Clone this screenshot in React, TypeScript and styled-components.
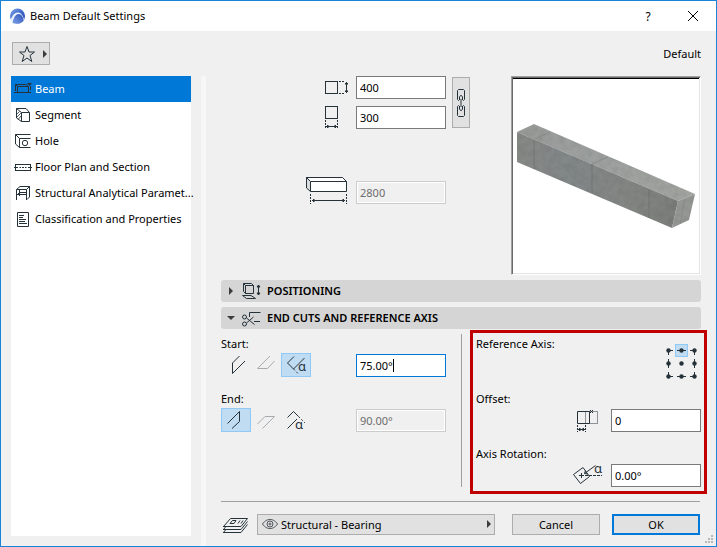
import React, { useState } from "react";
import styled, { createGlobalStyle, css } from "styled-components";

const INK = "#26323a";
const FAINT = "#a8abad";

const GlobalStyle = createGlobalStyle`
  * { box-sizing: border-box; }
  body { margin: 0; }
  body, button, input, select {
    font-family: "Noto Sans", "Open Sans", sans-serif;
    font-size: 11px;
    color: #000;
  }
  svg { display: block; flex: none; }
`;

/* ---------- window frame ---------- */

const Window = styled.div`
  position: relative;
  display: flex;
  flex-direction: column;
  min-height: 100vh;
  border: 1px solid #1883d7;
  background: #f0f0f0;
`;

const TitleBar = styled.header`
  display: flex;
  align-items: center;
  height: 30px;
  padding: 0 8px;
  background: #fff;
`;

const Title = styled.h1`
  flex: 1;
  margin: 0 0 0 4px;
  font-size: 11px;
  font-weight: 400;
  line-height: 16px;
`;

const CaptionButton = styled.button`
  display: flex;
  align-items: center;
  justify-content: center;
  width: 60px;
  height: 28px;
  padding: 0;
  border: 0;
  background: none;
  font-size: 12px;
  &:last-child { width: 30px; }
`;

const TopRow = styled.div`
  display: flex;
  align-items: center;
  justify-content: space-between;
  height: 45px;
  padding: 0 15px 0 11px;
`;

const FavoritesButton = styled.button`
  display: flex;
  align-items: center;
  gap: 4px;
  width: 38px;
  height: 23px;
  padding: 0 3px 0 5px;
  border: 1px solid #adadad;
  background: #e1e1e1;
`;

const Body = styled.div`
  flex: 1;
  display: grid;
  grid-template-columns: 180px 15px minmax(0, 1fr);
  padding: 0 15px 0 10px;
`;

const Sidebar = styled.nav`
  margin-bottom: 10px;
  background: #fff;
`;

const NavItem = styled.button<{ $active: boolean }>`
  display: flex;
  align-items: center;
  gap: 3px;
  width: 100%;
  height: 26px;
  padding: 0 0 0 3px;
  border: 0;
  text-align: left;
  line-height: 16px;
  white-space: nowrap;
  background: ${(p) => (p.$active ? "#0078d7" : "transparent")};
  color: ${(p) => (p.$active ? "#fff" : "#000")};
`;

const Splitter = styled.div`
  margin-left: 10px;
  background: #f7f7f7;
`;

const Content = styled.main`
  display: flex;
  flex-direction: column;
  gap: 5px;
  margin-left: 15px;
`;

/* ---------- fields ---------- */

const Geometry = styled.section`
  display: flex;
  align-items: flex-start;
  gap: 6px;
  height: 199px;
`;

const FieldStack = styled.div`
  display: flex;
  flex-direction: column;
  gap: 7px;
  width: 225px;
`;

const FieldRow = styled.label<{ $apart?: boolean }>`
  display: flex;
  align-items: flex-end;
  justify-content: flex-end;
  gap: 7px;
  margin-top: ${(p) => (p.$apart ? "40px" : "0")};
`;

const TextField = styled.input`
  width: 90px;
  height: 23px;
  padding: 0 3px;
  border: 1px solid #7a7a7a;
  border-radius: 0;
  outline: 0;
  background: #fff;
  &:disabled {
    border-color: #ccc;
    background: #f0f0f0;
    box-shadow: inset 0 0 0 1px #fff;
    color: #6d6d6d;
  }
`;

const EditingField = styled.span`
  position: relative;
  display: flex;
  margin-left: auto;
  ${TextField} { border-color: #0078d7; }
`;

const Caret = styled.span`
  position: absolute;
  left: 37px;
  top: 5px;
  width: 1px;
  height: 13px;
  background: #000;
`;

const LinkButton = styled.button`
  display: flex;
  align-items: center;
  justify-content: center;
  width: 18px;
  height: 51px;
  margin-top: 1px;
  padding: 0;
  border: 1px solid #adadad;
  background: #e1e1e1;
`;

const Preview = styled.div`
  width: 190px;
  height: 199px;
  margin-left: auto;
  border: 1px solid;
  border-color: #a0a0a0 #fff #fff #a0a0a0;
  box-shadow: inset 1px 1px 0 #696969, inset -1px -1px 0 #e3e3e3, inset 0 2px 0 #000;
  background: #fff;
`;

/* ---------- sections ---------- */

const SectionHeader = styled.button`
  display: flex;
  align-items: center;
  height: 22px;
  padding: 0 5px;
  border: 0;
  border-radius: 3px;
  background: #d5d5d5;
  font-weight: 600;
  line-height: 16px;
  text-align: left;
  > svg:first-child { margin-right: 6px; }
`;

const HeaderText = styled.span`
  margin-left: 5px;
`;

const Panel = styled.section`
  display: flex;
`;

const CutsColumn = styled.div`
  display: flex;
  flex-direction: column;
  gap: 12px;
  width: 225px;
  margin-right: 15px;
`;

const AxisColumn = styled.div`
  position: relative;
  flex: 1;
  display: flex;
  flex-direction: column;
  gap: 12px;
  padding-left: 14px;
  border-left: 1px solid #a0a0a0;
`;

const Highlight = styled.div`
  position: absolute;
  inset: -4px -6px -7px 8px;
  border: 3px solid #c00000;
  pointer-events: none;
`;

const Group = styled.div`
  height: 43px;
`;

const GroupLabel = styled.div`
  display: block;
  line-height: 19px;
`;

const ControlRow = styled.div`
  display: flex;
  align-items: flex-end;
  height: 24px;
`;

const ToggleButton = styled.button<{ $on: boolean }>`
  display: flex;
  width: 30px;
  height: 24px;
  padding: 0;
  border: 0;
  background: transparent;
  ${(p) =>
    p.$on &&
    css`
      background: #c0dcf3;
      box-shadow: inset 0 0 0 1px #90c8f6;
    `}
`;

const PushedField = styled(TextField)`
  margin-left: auto;
`;

const AxisGroup = styled(Group)`
  display: flex;
  justify-content: space-between;
`;

const PinGrid = styled.div`
  display: grid;
  grid-template-columns: repeat(3, 13px);
  grid-auto-rows: 13px;
  margin-top: 10px;
`;

const Pin = styled.label<{ $on: boolean }>`
  position: relative;
  width: 13px;
  height: 13px;
  background: ${(p) => (p.$on ? "#c0dcf3" : "transparent")};
  box-shadow: ${(p) => (p.$on ? "inset 0 0 0 1px #90c8f6" : "none")};
  input {
    position: absolute;
    inset: 0;
    margin: 0;
    appearance: none;
  }
`;

/* ---------- footer ---------- */

const Footer = styled.footer`
  display: flex;
  align-items: center;
  gap: 12px;
  margin: 9px 1px 11px 0;
  padding-top: 12px;
  border-top: 1px solid #a0a0a0;
`;

const LayerPicker = styled.label`
  flex: 1;
  display: flex;
  align-items: center;
  gap: 8px;
  margin-right: 5px;
  padding-left: 1px;
`;

const SelectBox = styled.span`
  position: relative;
  flex: 1;
  display: flex;
  svg {
    position: absolute;
    top: 3px;
    left: 4px;
    pointer-events: none;
  }
  svg:last-child {
    left: auto;
    right: 1px;
    top: 5px;
  }
`;

const Select = styled.select`
  flex: 1;
  height: 21px;
  padding: 0 20px 0 23px;
  border: 1px solid #adadad;
  border-radius: 0;
  background: #e1e1e1;
  appearance: none;
`;

const DialogButton = styled.button<{ $primary?: boolean }>`
  width: 88px;
  height: 21px;
  padding: 0;
  border: ${(p) => (p.$primary ? "2px solid #0078d7" : "1px solid #adadad")};
  background: #e1e1e1;
  line-height: 16px;
`;

const Grip = styled.svg`
  position: absolute;
  right: 2px;
  bottom: 2px;
`;

/* ---------- drawings ---------- */

type Draw = { w: number; h: number; color?: string; children: React.ReactNode };
const Icon = ({ w, h, color = INK, children }: Draw) => (
  <svg width={w} height={h} viewBox={`0 0 ${w} ${h}`} fill="none" stroke={color} overflow="visible" aria-hidden="true">
    {children}
  </svg>
);

const Alpha = ({ x, y }: { x: number; y: number }) => (
  <text x={x} y={y} fontSize="13" fill={INK} stroke="none" fontFamily="Noto Sans, sans-serif">α</text>
);

const Logo = () => (
  <svg width="17" height="17" viewBox="0 0 17 17" aria-hidden="true">
    <defs>
      <linearGradient id="logo" x1="0" y1="0" x2="1" y2="1">
        <stop offset="0" stopColor="#7ea6e8" />
        <stop offset="0.500" stopColor="#3f68c8" />
        <stop offset="1" stopColor="#2340a0" />
      </linearGradient>
      <linearGradient id="dome" x1="0" y1="1" x2="1" y2="0">
        <stop offset="0" stopColor="#7fa4e8" />
        <stop offset="1" stopColor="#2c50b8" />
      </linearGradient>
    </defs>
    <circle cx="8.500" cy="8" r="7.500" fill="url(#logo)" />
    <path d="M1.500 12.500C3 7 6.500 4 9.500 4.500C13 5.200 14.500 9 15 12C12.500 16 5 17 1.500 12.500Z" fill="#eef4fd" />
    <path d="M3.500 15C4 10.500 6.500 6 9.500 6C13 6.200 14.500 10 14.500 13C11.500 16 7 16.500 3.500 15Z" fill="url(#dome)" />
  </svg>
);

const Triangle = ({ down }: { down?: boolean }) => (
  <svg width="10" height="10" viewBox="0 0 10 10" fill="#3c3c3c" aria-hidden="true">
    <path d={down ? "M1 3H9L5 7Z" : "M3 1V9L7 5Z"} />
  </svg>
);

const navItems: { label: string; art: React.ReactNode }[] = [
  {
    label: "Beam",
    art: <><path d="M3.500 6.500H14.500V12.500H3.500ZM1.500 4.500H12L14.500 6.500M1.500 4.500L3.500 6.500M1.500 4.500V11M0 12.500H17M16.500 6V10" /><path d="M13 3H18L15.500 6Z" fill={INK} stroke="none" /></>,
  },
  {
    label: "Segment",
    art: <><path d="M7.500 6.500H15.500V15.500H7.500ZM2.500 2.500H12L15.500 6.500M2.500 2.500L7.500 6.500M2.500 2.500V12L7.500 15.500" /><path d="M3 8L5.500 5.500M3 11L7 7M4.500 13L7 10" strokeWidth="0.800" /></>,
  },
  {
    label: "Hole",
    art: <><path d="M16.500 2.500H1.500V12L5.500 15.500H16.500M1.500 2.500L5.500 6.500H16.500M5.500 6.500V15.500" /><circle cx="11" cy="11" r="2.700" /></>,
  },
  {
    label: "Floor Plan and Section",
    art: <><rect x="1.500" y="6.500" width="15" height="6" /><path d="M0 9.500H4M5.500 9.500H7M8 9.500H10M11 9.500H12.500M14 9.500H18" /></>,
  },
  {
    label: "Structural Analytical Paramet...",
    art: <path d="M2.500 16V5.500L6 2.500H15.500V13L13 15.500M2.500 5.500H12.500V16M12.500 5.500L15.500 2.500M5.500 5.500V12M2.500 10.500H12.500M5.500 8.500H12M3 11L6 8" />,
  },
  {
    label: "Classification and Properties",
    art: <path d="M3.500 2.500H14.500V16.500H3.500ZM5 5.500H10M5 7.500H9M5 9.500H12M5 11.500H11M5 13.500H13" />,
  },
];

const HeightIcon = () => (
  <Icon w={44} h={23}>
    <rect x="20.500" y="5.500" width="12" height="12" />
    <path d="M34 5.500H39M34 17.500H39" strokeDasharray="2 1" />
    <path d="M41.500 6V17M40 8L41.500 6.500L43 8ZM40 15L41.500 16.500L43 15Z" fill={INK} />
  </Icon>
);

const WidthIcon = () => (
  <Icon w={44} h={23}>
    <rect x="20.500" y="0.500" width="12" height="12" />
    <path d="M20.500 14V23M32.500 14V23" strokeDasharray="2 1" />
    <path d="M21 20.500H32M23 19L21.500 20.500L23 22ZM30 19L31.500 20.500L30 22Z" fill={INK} />
  </Icon>
);

const LengthIcon = () => (
  <Icon w={44} h={28}>
    <path d="M1.500 1.500L5.500 5.500V15.500L1.500 12Z" fill="#d9dcdd" />
    <path d="M1.500 1.500H37.500L41.500 5.500V15.500H5.500V5.500Z" fill="#fff" />
    <path d="M5.500 5.500H41.500" />
    <path d="M5.500 18V28M41.500 18V28" strokeDasharray="2 1" />
    <path d="M7 24.500H40M9 23L7.500 24.500L9 26ZM38 23L39.500 24.500L38 26Z" fill={INK} />
  </Icon>
);

const ChainIcon = () => (
  <Icon w={10} h={30}>
    <path d="M3 12.500H2.500L1.500 11.500V2.500L2.500 1.500H7.500L8.500 2.500V11.500L7.500 12.500H7M3 17.500H2.500L1.500 18.500V27.500L2.500 28.500H7.500L8.500 27.500V18.500L7.500 17.500H7M3.500 12V9L4.500 7.500H5.500L6.500 9V12M3.500 18V21L4.500 22.500H5.500L6.500 21V18M5 11V19" />
  </Icon>
);

const startArt = [
  <path d="M18.500 3L11.500 10V20.500L24 8" />,
  <path d="M19 3L6.500 15.500H16.500L23.500 8" />,
  <><path d="M13 3.500L6.500 10L12.500 16L23.500 5" /><path d="M12.500 16L18 21.500" strokeDasharray="2 2" /><Alpha x={17} y={18} /></>,
];

const endArt = [
  <path d="M6.500 15.500L18.500 3.500V13.500L11 20.500" />,
  <path d="M6.500 16L14 8.500H23.500L11.500 20.500" />,
  <><path d="M6.500 9.500L12.500 3.500L17.500 8.500M6.500 20.500L16 11" /><path d="M17.500 8.500L24 15" strokeDasharray="2 2" /><Alpha x={14} y={21} /></>,
];

const OffsetIcon = () => (
  <Icon w={32} h={24}>
    <rect x="13.500" y="3.500" width="12" height="12" stroke="#8d9397" />
    <path d="M5.500 3.500H17.500V15.500H5.500Z" />
    <path d="M18 2L21 5M18 5L21 2" />
    <path d="M5.500 17V24M13.500 17V24" strokeDasharray="2 1" />
    <path d="M6 21.500H13M8 20L6.500 21.500L8 23ZM11 20L12.500 21.500L11 23Z" fill={INK} />
  </Icon>
);

const RotationIcon = () => (
  <Icon w={32} h={24}>
    <path d="M1.500 11.500L11 4.500L17.500 13.500L8.500 20.500Z" />
    <path d="M7 12.500H12M9.500 10V15" />
    <path d="M13 12.500H30" strokeDasharray="3 1" />
    <path d="M12.500 10.500L23.500 2.500M13.500 7.500L12.500 10.500L16 11" />
    <Alpha x={22} y={10} />
  </Icon>
);

const PositioningIcon = () => (
  <Icon w={20} h={18}>
    <path d="M3.500 3.500H11.500V11.500H3.500ZM1.500 1.500H9.500L11.500 3.500M1.500 1.500L3.500 3.500M1.500 1.500V9.500L3.500 11.500M0.500 13.500H9L13.500 16.500H4.500Z" />
    <path d="M16.500 3V13M15 5L16.500 3L18 5ZM15 11L16.500 13L18 11Z" fill={INK} />
  </Icon>
);

const ScissorsIcon = () => (
  <Icon w={20} h={18}>
    <circle cx="2.500" cy="8" r="2" />
    <circle cx="2.500" cy="15" r="2" />
    <path d="M4.500 9L12.500 15.500M4.500 14L11.500 8M7.500 8V3.500H18.500M12 12.500H18" />
  </Icon>
);

const LayersIcon = () => (
  <Icon w={27} h={18}>
    <path d="M8.500 2.500H25.500L19 10.500H1.500ZM19 13.500L25.500 5.500M19 16.500L25.500 8.500M10.500 4.500H14L12 7.500H8ZM16 7.500L18 4.500M19 7.500L21 4.500" />
    <path d="M1 10.500H19M1 13.500H19M1 16.500H19M3.500 11L1.500 13.500M3.500 14L1.500 16.500" />
  </Icon>
);

const EyeIcon = () => (
  <Icon w={18} h={14} color="#4b5358">
    <path d="M1.500 7C4 3.500 6.500 2.500 9 2.500S14 3.500 16.500 7C14 10.500 11.500 11.500 9 11.500S4 10.500 1.500 7Z" />
    <circle cx="9" cy="7" r="3" />
    <circle cx="9" cy="7" r="1" />
  </Icon>
);

const BeamPreview = () => (
  <svg width="188" height="197" viewBox="0 0 188 197" role="img" aria-label="Beam preview">
    <defs>
      <linearGradient id="front" x1="0" y1="0" x2="1" y2="0">
        <stop offset="0" stopColor="#868885" />
        <stop offset="0.300" stopColor="#828788" />
        <stop offset="0.700" stopColor="#838683" />
        <stop offset="1" stopColor="#7a7d7a" />
      </linearGradient>
      <linearGradient id="top" x1="0" y1="0" x2="1" y2="0">
        <stop offset="0" stopColor="#989a97" />
        <stop offset="0.400" stopColor="#9ca09f" />
        <stop offset="1" stopColor="#a2a49f" />
      </linearGradient>
      <filter id="grain" x="0" y="0" width="1" height="1">
        <feTurbulence type="fractalNoise" baseFrequency="0.150" numOctaves="3" />
        <feColorMatrix values="0 0 0 0 0  0 0 0 0 0  0 0 0 0 0  1 0 0 0 -0.350" />
        <feComposite in2="SourceGraphic" operator="in" />
      </filter>
    </defs>
    <path d="M5 55L22 47L183 117L166 124Z" fill="url(#top)" />
    <path d="M5 55L166 124L160 151L5 85Z" fill="url(#front)" />
    <path d="M166 124L183 117L177 143L160 151Z" fill="#959794" />
    <path d="M22 63V92M80 87V116M137 112V141" stroke="#6e716f" strokeWidth="0.800" />
    <path d="M80 87L96 80M22 62L38 55M173 122L168 147" stroke="#858885" strokeWidth="0.700" />
    <path d="M5 55L22 47L183 117L177 143L160 151L5 85Z" filter="url(#grain)" opacity="0.120" />
  </svg>
);

/* Each reference point has short ticks along the outline edges it lies on. */
const pinArt = (row: number, col: number) => {
  const d: string[] = [];
  if (row !== 1 && col > 0) d.push("M2 6.500H6");
  if (row !== 1 && col < 2) d.push("M7 6.500H11");
  if (col !== 1 && row > 0) d.push("M6.500 2V6");
  if (col !== 1 && row < 2) d.push("M6.500 7V11");
  return d.join("");
};
const pinNames = ["Top", "Middle", "Bottom"].flatMap((r) => ["left", "center", "right"].map((c) => `${r} ${c}`));

type CutProps = { name: string; art: React.ReactNode[]; value: number; onPick: (i: number) => void };
const cutNames = ["Vertical", "Horizontal", "Custom angle"];
const CutButtons = ({ name, art, value, onPick }: CutProps) => (
  <>
    {art.map((drawing, i) => (
      <ToggleButton key={i} type="button" $on={value === i} aria-pressed={value === i} aria-label={`${name}: ${cutNames[i]}`} onClick={() => onPick(i)}>
        <Icon w={30} h={24} color={i === 1 ? FAINT : INK}>{drawing}</Icon>
      </ToggleButton>
    ))}
  </>
);

export default function App() {
  const [page, setPage] = useState(0);
  const [start, setStart] = useState(2);
  const [end, setEnd] = useState(0);
  const [pin, setPin] = useState(1);

  return (
    <>
      <GlobalStyle />
      <Window>
        <TitleBar>
          <Logo />
          <Title>Beam Default Settings</Title>
          <CaptionButton type="button">?</CaptionButton>
          <CaptionButton type="button" aria-label="Close">
            <Icon w={12} h={12} color="#000"><path d="M1 1L11 11M11 1L1 11" /></Icon>
          </CaptionButton>
        </TitleBar>

        <TopRow>
          <FavoritesButton type="button" aria-label="Favorites">
            <Icon w={18} h={18}><path d="M9 1.500L11 7H16.500L12 10.500L13.800 16.500L9 13L4.200 16.500L6 10.500L1.500 7H7Z" /></Icon>
            <Triangle />
          </FavoritesButton>
          <span>Default</span>
        </TopRow>

        <Body>
          <Sidebar>
            {navItems.map((item, i) => (
              <NavItem key={item.label} type="button" $active={page === i} onClick={() => setPage(i)}>
                <Icon w={18} h={18}>{item.art}</Icon>
                <span>{item.label}</span>
              </NavItem>
            ))}
          </Sidebar>
          <Splitter />
          <Content>
            <Geometry>
              <FieldStack>
                <FieldRow><HeightIcon /><TextField aria-label="Height" defaultValue="400" /></FieldRow>
                <FieldRow><WidthIcon /><TextField aria-label="Width" defaultValue="300" /></FieldRow>
                <FieldRow $apart><LengthIcon /><TextField aria-label="Length" defaultValue="2800" disabled /></FieldRow>
              </FieldStack>
              <LinkButton type="button" aria-label="Link height and width"><ChainIcon /></LinkButton>
              <Preview><BeamPreview /></Preview>
            </Geometry>

            <SectionHeader type="button" aria-expanded={false}>
              <Triangle />
              <PositioningIcon />
              <HeaderText>POSITIONING</HeaderText>
            </SectionHeader>
            <SectionHeader type="button" aria-expanded>
              <Triangle down />
              <ScissorsIcon />
              <HeaderText>END CUTS AND REFERENCE AXIS</HeaderText>
            </SectionHeader>

            <Panel>
              <CutsColumn>
                <Group>
                  <GroupLabel as="label" htmlFor="start">Start:</GroupLabel>
                  <ControlRow>
                    <CutButtons name="Start" art={startArt} value={start} onPick={setStart} />
                    <EditingField>
                      <TextField id="start" defaultValue="75.00°" />
                      <Caret />
                    </EditingField>
                  </ControlRow>
                </Group>
                <Group>
                  <GroupLabel as="label" htmlFor="end">End:</GroupLabel>
                  <ControlRow>
                    <CutButtons name="End" art={endArt} value={end} onPick={setEnd} />
                    <PushedField id="end" defaultValue="90.00°" disabled />
                  </ControlRow>
                </Group>
              </CutsColumn>

              <AxisColumn>
                <AxisGroup role="radiogroup" aria-labelledby="axis">
                  <GroupLabel id="axis">Reference Axis:</GroupLabel>
                  <PinGrid>
                    {pinNames.map((name, i) => (
                      <Pin key={name} $on={pin === i}>
                        <input type="radio" name="axis" aria-label={name} checked={pin === i} onChange={() => setPin(i)} />
                        <Icon w={13} h={13}>
                          <path d={pinArt(Math.floor(i / 3), i % 3)} />
                          <circle cx="6.500" cy="6.500" r="2.200" fill={INK} stroke="none" />
                        </Icon>
                      </Pin>
                    ))}
                  </PinGrid>
                </AxisGroup>
                <Group>
                  <GroupLabel as="label" htmlFor="offset">Offset:</GroupLabel>
                  <FieldRow as="div"><OffsetIcon /><TextField id="offset" defaultValue="0" /></FieldRow>
                </Group>
                <Group>
                  <GroupLabel as="label" htmlFor="rotation">Axis Rotation:</GroupLabel>
                  <FieldRow as="div"><RotationIcon /><TextField id="rotation" defaultValue="0.00°" /></FieldRow>
                </Group>
                <Highlight />
              </AxisColumn>
            </Panel>

            <Footer>
              <LayerPicker>
                <LayersIcon />
                <SelectBox>
                  <Select aria-label="Layer" defaultValue="bearing">
                    <option value="bearing">Structural - Bearing</option>
                  </Select>
                  <EyeIcon />
                  <Triangle />
                </SelectBox>
              </LayerPicker>
              <DialogButton type="button">Cancel</DialogButton>
              <DialogButton type="button" $primary>OK</DialogButton>
            </Footer>
          </Content>
        </Body>

        <Grip width="9" height="9" viewBox="0 0 9 9" fill="#b8b8b8" aria-hidden="true">
          <path d="M6 0H8V2H6ZM3 3H5V5H3ZM6 3H8V5H6ZM0 6H2V8H0ZM3 6H5V8H3ZM6 6H8V8H6Z" />
        </Grip>
      </Window>
    </>
  );
}
